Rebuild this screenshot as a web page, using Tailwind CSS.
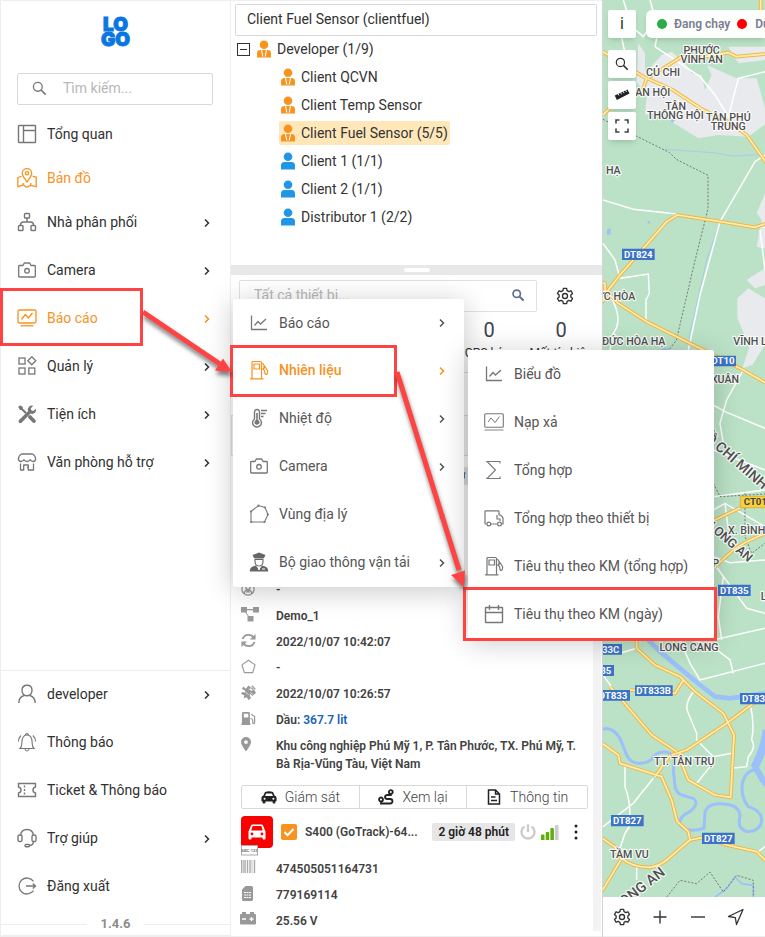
<!DOCTYPE html>
<html lang="vi">
<head>
<meta charset="utf-8">
<meta name="viewport" content="width=device-width, initial-scale=1">
<title>Bản đồ</title>
<script src="https://cdn.jsdelivr.net/npm/@tailwindcss/browser@4"></script>
</head>
<body class="font-['Roboto','Noto_Sans',sans-serif] text-sm text-[#303030]">

<svg class="hidden" aria-hidden="true">
  <symbol id="chev" viewBox="0 0 8 10"><path d="M2 1.500 5.500 5 2 8.500" fill="none" stroke="currentColor" stroke-width="1.500"/></symbol>
  <symbol id="search" viewBox="0 0 16 16"><circle cx="6.200" cy="6.200" r="4.700" fill="none" stroke="currentColor" stroke-width="1.400"/><path d="m9.600 9.600 5 5" stroke="currentColor" stroke-width="1.700"/></symbol>
  <symbol id="dash" viewBox="0 0 20 20"><g fill="none" stroke="currentColor" stroke-width="1.400"><rect x="1.500" y="1.500" width="17" height="17" rx=".5"/><path d="M6.500 1.500v17M6.500 6.500h12"/></g></symbol>
  <symbol id="map" viewBox="0 0 20 20"><g fill="none" stroke="currentColor" stroke-width="1.300" stroke-linejoin="round"><path d="M10 14C7.500 10.500 5.300 8 5.300 5.300a4.700 4.700 0 0 1 9.400 0C14.700 8 12.500 10.500 10 14Z"/><circle cx="10" cy="5.300" r="1.600"/><path d="M4.500 8.300.8 9.500v9.300l5.400-1.900 3.300 2.300 4.200-1.900 5.500 1.300V9.200l-3.700-1M6.200 17v-2M13.700 17v-2"/></g></symbol>
  <symbol id="dist" viewBox="0 0 20 20"><g fill="none" stroke="currentColor" stroke-width="1.400"><rect x="7.500" y="1.500" width="5" height="4.500" rx=".8"/><rect x="1.500" y="13.500" width="4.500" height="5" rx=".8"/><rect x="14" y="13.500" width="4.500" height="5" rx=".8"/><path d="M10 6v4M3.500 13.500V13a3 3 0 0 1 3-3h7a3 3 0 0 1 3 3v.500"/></g></symbol>
  <symbol id="camera" viewBox="0 0 20 20"><g fill="none" stroke="currentColor" stroke-width="1.300" stroke-linejoin="round"><path d="M2.500 5.500h3.500L7.300 3h5.400L14 5.500h3.500q.8 0 .8.800v9.900q0 .8-.8.800h-15q-.8 0-.8-.8V6.300q0-.8.8-.8Z"/><circle cx="10" cy="10.800" r="2.300"/></g></symbol>
  <symbol id="report" viewBox="0 0 20 20"><g fill="none" stroke="currentColor" stroke-width="1.300" stroke-linejoin="round"><rect x="1" y="2" width="18" height="13" rx="1.500"/><path d="m4.500 11.500 3.800-5 3 3.500L15.500 5"/><path d="M3.500 17.800h13"/></g></symbol>
  <symbol id="grid" viewBox="0 0 20 20"><g fill="none" stroke="currentColor" stroke-width="1.300"><rect x="2" y="2" width="6" height="6"/><rect x="2" y="12" width="6" height="6"/><rect x="11.800" y="12" width="6" height="6"/><path d="m14.800.8 4 4-4 4-4-4Z"/></g></symbol>
  <symbol id="tools" viewBox="0 0 20 20"><path fill="currentColor" d="M1.200 3 3 1.300 5.800 3v1.600l4 4-1.400 1.400-4-4H3ZM11 12.500l1.800-1.600 1 .4 4.700 4.600q.9 1.300-.3 2.500t-2.400.2l-4.500-4.700Z"/><path fill="currentColor" d="M18.800 4.800q.8 3-1.600 4.500-1.600 1-3.600.3L4.500 18.700q-1.500.9-2.500-.1t0-2.500L11 7.200q-.8-2.700 1-4.500Q13.700 1 16.300 1.800L13.800 4.300l.5 2 2 .6Z"/></symbol>
  <symbol id="store" viewBox="0 0 20 20"><g fill="none" stroke="currentColor" stroke-width="1.300" stroke-linejoin="round"><path d="M4.500 2h11q2.800 1.500 3.200 5-.5 2.500-2.500 2.500-1.800 0-3-1.800-1.200 1.800-3.200 1.800T7 7.700Q5.700 9.500 4 9.500 2 9.500 1.300 7q.4-3.500 3.200-5Z"/><path d="M3.500 11.500V18h3.200v-5h4.600v5h5.200v-6.500M10 15.500h1.500"/></g></symbol>
  <symbol id="user" viewBox="0 0 20 20"><g fill="none" stroke="currentColor" stroke-width="1.400"><path d="M10 1.300c3 0 5 2 5 5s-2 5.500-5 5.500-5-2.500-5-5.500 2-5 5-5ZM1.800 19c0-4.500 2.200-6.500 5.200-7.500M18.200 19c0-4.500-2.200-6.500-5.200-7.500"/></g></symbol>
  <symbol id="bell" viewBox="0 0 20 20"><g fill="none" stroke="currentColor" stroke-width="1.100"><path d="M3 16.500q1.800-1.500 1.800-5C4.800 6 6.500 3 10 3s5.200 3 5.200 8.500q0 3.500 1.800 5ZM8.500 3q0-1.500 1.500-1.500T11.500 3M8 17q.4 2 2 2t2-2M4 3.500Q1.500 6 1.500 9.500M16 3.500q2.500 2.500 2.500 6"/></g></symbol>
  <symbol id="ticket" viewBox="0 0 20 20"><g fill="none" stroke="currentColor" stroke-width="1.400"><path d="M1.500 3.500h17V7q-2.500.5-2.500 3t2.500 3v3.500h-17V13Q4 12.500 4 10T1.500 7Z"/><path d="M7.500 5.500v9.500" stroke-dasharray="2 1.500"/></g></symbol>
  <symbol id="headset" viewBox="0 0 20 20"><g fill="none" stroke="currentColor" stroke-width="1.400"><path d="M3.500 7Q4.500 1.500 10 1.500T16.500 7"/><rect x="1" y="7" width="4" height="6.500" rx="1.600"/><rect x="15" y="7" width="4" height="6.500" rx="1.600"/><path d="M16.500 13.500q0 3.500-4 4"/><rect x="8" y="16.500" width="4.500" height="2.200" rx="1"/></g></symbol>
  <symbol id="logout" viewBox="0 0 20 20"><g fill="none" stroke="currentColor" stroke-width="1.300"><path d="M16.500 5.300A8 8 0 1 0 16.500 14.700M9 10h9.500M15.800 7.500l2.700 2.500-2.700 2.500"/></g></symbol>
  <symbol id="chart" viewBox="0 0 20 20"><g fill="none" stroke="currentColor" stroke-width="1.300"><path d="M2.500 2.500v14h15.500M5.500 12.500l3.500-4 2.500 2.500L17 6"/></g></symbol>
  <symbol id="fuel" viewBox="0 0 20 20"><g fill="none" stroke="currentColor" stroke-width="1.200"><path d="M3 18.500V2.500q0-1 1-1h7.500q1 0 1 1v16M1 18.800h13.500M5 4h5.500v5H5ZM13.500 3l5 7.500q.5 1.500-.5 3.500-1.500 1-2-.5l-.5-3-2-2M15 5.500v3.500"/></g></symbol>
  <symbol id="thermo" viewBox="0 0 20 20"><g fill="none" stroke="currentColor" stroke-width="1.400"><path d="M5.500 11V4a2.500 2.500 0 0 1 5 0v7a4.400 4.400 0 1 1-5 0Z"/><path d="M12 2.500h6M12 5.500h4.500M12 8.500h2.500"/></g><path d="M7.200 5h1.600v7a2.500 2.500 0 1 1-1.600 0Z" fill="currentColor"/></symbol>
  <symbol id="poly" viewBox="0 0 20 20"><path d="M2 7.500 9.500 1.500 16 3.500l3 7-3.500 7.500H2Z" fill="none" stroke="currentColor" stroke-width="1.100"/><g fill="currentColor"><circle cx="2" cy="7.500" r="1.100"/><circle cx="9.500" cy="1.700" r="1.100"/><circle cx="16" cy="3.500" r="1"/><circle cx="18.800" cy="10.500" r="1.100"/><circle cx="15.500" cy="18" r="1.100"/><circle cx="2.200" cy="18" r="1.100"/></g></symbol>
  <symbol id="officer" viewBox="0 0 20 20"><path fill="currentColor" d="M3.500 3 10 .5 16.500 3l-1.500 3H5ZM5.500 6.500h9V8h-9ZM.8 19.500q0-4 3-5l3-1 3.200 4 3.200-4 3 1q3 1 3 5Z"/><path d="M6 8v2q.5 4 4 4t4-4V8" fill="none" stroke="currentColor" stroke-width="1.100"/><path d="m9 14.500 1 3.500 1-3.500M13 17h3" stroke="#fff" fill="none"/></symbol>
  <symbol id="monitor" viewBox="0 0 20 20"><g fill="none" stroke="currentColor"><rect x=".7" y="1.700" width="18.600" height="13.600" rx="1" stroke-width="1.100"/><path d="m4 10 3-4 4 4.500 4.500-6" stroke-width="1"/><path d="M.5 18h19" stroke-width="1.500" opacity=".6"/></g></symbol>
  <symbol id="sigma" viewBox="0 0 20 20"><path d="M16 3.500V1.500H3L11.500 10 3 18.500h13v-2" fill="none" stroke="currentColor" stroke-width="1.100"/></symbol>
  <symbol id="truck" viewBox="0 0 20 20"><g fill="none" stroke="currentColor" stroke-width="1.200" stroke-linejoin="round"><path d="M2.500 16H1.500q-.5 0-.5-.5V3.500q0-.7.7-.7h12.600q.7 0 .7.700V7h1.500q2.500 2 2.500 3.500V16h-1M7 16h6M13 7v4h3v2"/><circle cx="4.800" cy="16" r="1.900"/><circle cx="15.500" cy="16" r="1.900"/></g></symbol>
  <symbol id="cal" viewBox="0 0 20 20"><g fill="none" stroke="currentColor" stroke-width="1.400"><rect x="1.500" y="3.500" width="17" height="15" rx=".5"/><path d="M1.500 8.500h17M5.500 1v5M14.500 1v5"/></g></symbol>
  <symbol id="gear" viewBox="0 0 20 20"><g fill="none" stroke="currentColor" stroke-width="1.500" stroke-linejoin="round"><path d="M8.200 1.500h3.600l.5 2.500 1.900 1.100 2.400-.9 1.800 3.100-1.900 1.600v2.200l1.900 1.600-1.800 3.100-2.400-.9-1.900 1.100-.5 2.500H8.200L7.700 16l-1.900-1.100-2.400.9-1.800-3.100 1.900-1.600V8.900L1.600 7.300l1.800-3.100 2.400.9L7.700 4Z"/><circle cx="10" cy="10" r="2.800"/></g></symbol>
  <symbol id="tie" viewBox="0 0 16 18"><circle cx="8" cy="4.800" r="4.300" fill="currentColor"/><path fill="currentColor" d="M1 17v-3.500Q1 10.300 4.300 10h7.400q3.300.3 3.300 3.500V17q0 .5-.5.500h-13Q1 17.500 1 17Z"/><path d="M5.500 10l1.300 6.500M10.500 10l-1.300 6.500" stroke="#fff" stroke-width="1.100"/></symbol>
  <symbol id="person" viewBox="0 0 16 18"><circle cx="8" cy="4.800" r="4.300" fill="currentColor"/><path fill="currentColor" d="M1 17v-3.500Q1 10.300 4.300 10h7.400q3.300.3 3.300 3.500V17q0 .5-.5.500h-13Q1 17.500 1 17Z"/></symbol>
  <symbol id="car" viewBox="0 0 20 16"><path fill="currentColor" fill-rule="evenodd" d="M4 1.500Q4.500.5 5.500.5h9q1 0 1.500 1L18.500 7.500V14.500q0 1-1 1h-1q-1 0-1-1V13.500h-11v1q0 1-1 1h-1q-1 0-1-1V7.500ZM5.700 2 4.200 6.500h11.600L14.300 2ZM5 8.500a1.400 1.400 0 1 0 0 2.800 1.400 1.400 0 0 0 0-2.800Zm10 0a1.400 1.400 0 1 0 0 2.800 1.400 1.400 0 0 0 0-2.800Z"/></symbol>
</svg>

<div class="relative flex h-screen min-h-[720px] w-full overflow-hidden bg-white">

  <!-- Main navigation -->
  <nav class="flex w-[231px] shrink-0 flex-col border border-b-2 border-[#eee] bg-white">
    <div class="flex h-[72px] flex-col items-center justify-start pt-4 font-['Inter','Roboto',sans-serif] text-[19px] leading-[15px] font-black text-[#0876e4] [-webkit-text-stroke:1px_#0876e4]">
      <span>LO</span><span>GO</span>
    </div>
    <label class="mr-[17px] mb-[9px] ml-4 flex h-8 shrink-0 items-center rounded-xs border border-[#d9d9d9] pb-[2px] pl-[14px] text-[#777]">
      <svg class="mr-4 size-[15px] shrink-0"><use href="#search"/></svg>
      <input type="text" aria-label="Tìm kiếm" placeholder="Tìm kiếm..." class="w-full min-w-0 outline-none placeholder:text-[#b8b8b8]">
    </label>
    <div class="flex flex-col gap-2">
      <div class="-mb-1 flex flex-col gap-1">
        <a href="#" class="flex h-10 items-center gap-[10px] px-4"><svg class="size-5 text-[#777]"><use href="#dash"/></svg>Tổng quan</a>
        <a href="#" class="flex h-10 items-center gap-[10px] px-4 text-[#f7931e]"><svg class="size-5"><use href="#map"/></svg>Bản đồ</a>
      </div>
      <a href="#" class="flex h-10 items-center gap-[10px] px-4"><svg class="size-5 text-[#777]"><use href="#dist"/></svg>Nhà phân phối<svg class="mt-px mr-[3px] ml-auto h-[10px] w-2"><use href="#chev"/></svg></a>
      <a href="#" class="flex h-10 items-center gap-[10px] px-4"><svg class="size-5 text-[#777]"><use href="#camera"/></svg>Camera<svg class="mt-px mr-[3px] ml-auto h-[10px] w-2"><use href="#chev"/></svg></a>
      <a href="#" class="flex h-10 items-center gap-[10px] px-4 text-[#f7931e]"><svg class="size-5"><use href="#report"/></svg>Báo cáo<svg class="mt-px mr-[3px] ml-auto h-[10px] w-2"><use href="#chev"/></svg></a>
      <a href="#" class="flex h-10 items-center gap-[10px] px-4"><svg class="size-5 text-[#777]"><use href="#grid"/></svg>Quản lý<svg class="mt-px mr-[3px] ml-auto h-[10px] w-2"><use href="#chev"/></svg></a>
      <a href="#" class="flex h-10 items-center gap-[10px] px-4"><svg class="size-5 text-[#777]"><use href="#tools"/></svg>Tiện ích<svg class="mt-px mr-[3px] ml-auto h-[10px] w-2"><use href="#chev"/></svg></a>
      <a href="#" class="flex h-10 items-center gap-[10px] px-4"><svg class="size-5 text-[#777]"><use href="#store"/></svg>Văn phòng hỗ trợ<svg class="mt-px mr-[3px] ml-auto h-[10px] w-2"><use href="#chev"/></svg></a>
    </div>
    <div class="mt-auto flex flex-col gap-2 border-t border-[#eee] pt-[3px]">
      <a href="#" class="flex h-10 items-center gap-[10px] px-4"><svg class="size-5 text-[#777]"><use href="#user"/></svg>developer<svg class="mt-px mr-[3px] ml-auto h-[10px] w-2"><use href="#chev"/></svg></a>
      <a href="#" class="flex h-10 items-center gap-[10px] px-4"><svg class="size-5 text-[#777]"><use href="#bell"/></svg>Thông báo</a>
      <a href="#" class="flex h-10 items-center gap-[10px] px-4"><svg class="size-5 text-[#777]"><use href="#ticket"/></svg>Ticket &amp; Thông báo</a>
      <a href="#" class="flex h-10 items-center gap-[10px] px-4"><svg class="size-5 text-[#777]"><use href="#headset"/></svg>Trợ giúp<svg class="mt-px mr-[3px] ml-auto h-[10px] w-2"><use href="#chev"/></svg></a>
      <a href="#" class="flex h-10 items-center gap-[10px] px-4"><svg class="size-5 text-[#777]"><use href="#logout"/></svg>Đăng xuất</a>
    </div>
    <div class="flex h-[29px] items-center gap-[14px] pt-2 text-[13px] font-bold text-[#8c8c8c]">
      <span class="h-px flex-1 bg-[#eee]"></span>1.4.6<span class="h-px flex-1 bg-[#eee]"></span>
    </div>
  </nav>

  <!-- Account tree and device list -->
  <section class="flex w-[371px] shrink-0 flex-col border-y border-[#eee] bg-white">
    <div class="h-[264px] shrink-0 px-1 pt-[3px]">
      <input type="text" aria-label="Tài khoản" value="Client Fuel Sensor (clientfuel)" class="block h-8 w-[362px] rounded-xs border border-[#d9d9d9] px-[11px] pb-[2px] outline-none">
      <ul class="-mt-px text-[#333]">
        <li class="flex h-7 items-center pl-[2px]"><button aria-label="Thu gọn" class="mr-[6px] flex size-[13px] items-center justify-center border border-[#333]"><span class="h-px w-[7px] bg-[#333]"></span></button><svg class="mr-[5px] h-[18px] w-4 text-[#f7931e]"><use href="#tie"/></svg>Developer (1/9)</li>
        <li class="flex h-7 items-center pl-[45px]"><svg class="mr-[5px] h-[18px] w-4 text-[#f7931e]"><use href="#tie"/></svg>Client QCVN</li>
        <li class="flex h-7 items-center pl-[45px]"><svg class="mr-[5px] h-[18px] w-4 text-[#f7931e]"><use href="#tie"/></svg>Client Temp Sensor</li>
        <li class="flex h-7 items-center pl-11"><span class="flex h-6 items-center rounded-xs bg-[#ffe7ba] pr-[2px] pl-px"><svg class="mr-[5px] h-[18px] w-4 text-[#f7931e]"><use href="#tie"/></svg>Client Fuel Sensor (5/5)</span></li>
        <li class="flex h-7 items-center pl-[45px]"><svg class="mr-[5px] h-[18px] w-4 text-[#2196e8]"><use href="#person"/></svg>Client 1 (1/1)</li>
        <li class="flex h-7 items-center pl-[45px]"><svg class="mr-[5px] h-[18px] w-4 text-[#2196e8]"><use href="#person"/></svg>Client 2 (1/1)</li>
        <li class="flex h-7 items-center pl-[45px]"><svg class="mr-[5px] h-[18px] w-4 text-[#2196e8]"><use href="#person"/></svg>Distributor 1 (2/2)</li>
      </ul>
    </div>
    <div class="flex h-[10px] shrink-0 items-center justify-center bg-[#e8e8e8]"><span class="h-1 w-[26px] rounded-full bg-white"></span></div>

    <div class="flex min-h-0 flex-1 flex-col">
      <div class="flex shrink-0 items-center pt-[5px] pl-2">
        <label class="flex h-8 w-[298px] items-center rounded-xs border border-[#dfe0ea] pr-3 pb-[2px] pl-[14px] text-[#65708f]">
          <input type="text" aria-label="Tất cả thiết bị" placeholder="Tất cả thiết bị..." class="w-full min-w-0 outline-none placeholder:text-[#b8b8b8]">
          <svg class="size-3 shrink-0" viewBox="1 1 14 14"><circle cx="6.500" cy="6.500" r="4.300" fill="none" stroke="currentColor" stroke-width="2"/><path d="m10 10 4.500 4.500" stroke="currentColor" stroke-width="2.400"/></svg>
        </label>
        <button aria-label="Cài đặt" class="ml-[19px]"><svg class="size-[18px]"><use href="#gear"/></svg></button>
      </div>
      <div class="flex h-[61px] shrink-0 justify-end border-b border-[#ddd] pt-1 pr-[5px] text-center">
        <div class="w-[72px]"><div class="text-xl leading-7 text-[#3f4254]">0</div><div class="mt-px text-xs leading-4">GPS kém</div></div>
        <div class="w-[72px]"><div class="text-xl leading-7 text-[#3f4254]">0</div><div class="mt-px text-xs leading-4">Mất tín hiệu</div></div>
      </div>

      <div class="flex min-h-0 flex-1">
        <div class="min-w-0 flex-1 overflow-hidden">
          <div class="mt-[42px] h-[41px] border border-[#ddd] bg-[#f7f7f7]"></div>
          <div class="flex h-10 items-center justify-end pr-[78px]"><span class="rounded-xs bg-[#e4e4e4] px-[6px] text-xs leading-[18px] font-semibold">2 giờ 48 phút</span></div>
          <div class="mt-[81px] pr-[5px] pl-[10px] text-xs leading-[18px] font-semibold text-[#424242]">
            <div class="flex py-1"><svg class="mt-px mr-[21px] size-[14px] shrink-0 text-[#999]" viewBox="0 0 16 16"><g fill="none" stroke="currentColor" stroke-width="1.500"><circle cx="8" cy="8" r="7"/><circle cx="8" cy="6" r="2.500"/><path d="M3.500 13q1-4 4.500-4t4.500 4M6 12l2-1.500 2 1.500"/></g></svg>-</div>
            <div class="flex py-1"><svg class="mr-[17px] h-4 w-[18px] shrink-0 text-[#999]" viewBox="0 0 18 16"><path fill="currentColor" d="M0 0h6v5.500H0ZM12 0h6v5.500h-6ZM6.500 9h6v5.500h-6ZM5 2h8v1.200H5Z"/><path d="M4.500 5 8 10" stroke="currentColor"/></svg>Demo_1</div>
            <div class="flex py-1"><svg class="mr-5 size-[15px] shrink-0 text-[#999]" viewBox="0 0 16 16"><g fill="none" stroke="currentColor" stroke-width="2"><path d="M1.800 6.500Q3 2 8 2q3.500 0 5.500 3M14.200 9.500Q13 14 8 14q-3.500 0-5.500-3"/></g><path fill="currentColor" d="M15.500 1v6h-6ZM.5 15V9h6Z"/></svg>2022/10/07 10:42:07</div>
            <div class="flex py-1"><svg class="mr-5 size-[15px] shrink-0 text-[#999]" viewBox="0 0 16 16"><path d="m8 1.300 7 5-2.600 8.200H3.600L1 6.300Z" fill="none" stroke="currentColor" stroke-width="1.200"/></svg>-</div>
            <div class="flex py-1"><svg class="mr-5 size-[15px] shrink-0 text-[#999]" viewBox="0 0 16 16"><path fill="currentColor" d="M5 4 8 .5l2.500 2-1 2.500 1.500 1.200L14 5l2 3.500-4 3.200-1.800-2-1 .8 1.300 4-2.500 1.500-1.800-3L3 14l.5-3L0 9.500l1.500-2L4 8l.8-1.500L1 4l1.500-2.500Z"/><path d="m11.500.8 3.700 3.700M11 3l2.300 2.200" stroke="currentColor" stroke-width="1.300" fill="none"/><path d="m5 7.500 3 3M8 4l1.500 1.500M10.500 8l2 2" stroke="#fff" stroke-width=".8"/></svg>2022/10/07 10:26:57</div>
            <div class="flex py-1"><svg class="mr-5 size-[15px] shrink-0 text-[#999]" viewBox="0 0 16 16"><path fill="currentColor" fill-rule="evenodd" d="M1 2.500Q1 1 2.500 1H8q1.500 0 1.500 1.500V13H10v2H.5v-2H1ZM3 3v4h4.800V3Z"/><path d="M11 3.500 14.500 6v6.500q-.7 2-2 .2V9.500q-.3-1.500-2.500-1.500" fill="none" stroke="currentColor" stroke-width="1.300"/></svg><span>Dầu: <b class="font-semibold text-[#1763b5]">367.7 lit</b></span></div>
            <div class="flex py-1"><svg class="mr-[25px] h-[15px] w-[10px] shrink-0 text-[#999]" viewBox="0 0 10 15"><path fill="currentColor" fill-rule="evenodd" d="M5 0a5 5 0 0 1 5 5q0 2.800-5 9.500Q0 7.800 0 5a5 5 0 0 1 5-5Zm0 3.200a1.900 1.900 0 1 0 0 3.800 1.900 1.900 0 0 0 0-3.800Z"/></svg><span>Khu công nghiệp Phú Mỹ 1, P. Tân Phước, TX. Phú Mỹ, T. Bà Rịa-Vũng Tàu, Việt Nam</span></div>

            <div class="mt-2 flex h-6 rounded-xs border border-[#d9d9d9] text-sm font-light">
              <button class="flex flex-auto items-center justify-center gap-2 border-r border-[#d9d9d9]"><svg class="h-[13px] w-4 text-[#222]" viewBox="0 0 20 16"><path fill="currentColor" fill-rule="evenodd" d="M5 1q5-1.500 10 0l2 4.500q2.500 1 2.500 3V12q0 1-1.500 1v1.500q0 1-1.200 1h-1q-1.300 0-1.300-1V13h-9v1.500q0 1-1.300 1h-1q-1.200 0-1.200-1V13Q.5 13 .5 12V8.500q0-2 2.500-3ZM6.500 3 5 6h10l-1.500-3ZM4.500 8.300a1.300 1.300 0 1 0 0 2.600 1.300 1.300 0 0 0 0-2.600Zm11 0a1.300 1.300 0 1 0 0 2.600 1.300 1.300 0 0 0 0-2.600Z"/></svg>Giám sát</button>
              <button class="flex flex-auto items-center justify-center gap-2 border-r border-[#d9d9d9]"><svg class="size-4 text-[#222]" viewBox="0 0 16 16"><g fill="none" stroke="currentColor" stroke-width="1.800"><circle cx="12.800" cy="3" r="1.900"/><circle cx="3" cy="10.500" r="2"/><path d="M3 12.500v2h9q2.500 0 2.500-2.200T12 10H9.500Q7 10 7 8t2.500-2h3.300V5"/></g></svg>Xem lại</button>
              <button class="flex flex-auto items-center justify-center gap-2"><svg class="size-4 text-[#222]" viewBox="0 0 16 16"><path d="M2.500 1h7l4 4v10h-11ZM9.500 1v4h4M5 8h4.500M5 11.500h6" fill="none" stroke="currentColor" stroke-width="1.500"/></svg>Thông tin</button>
            </div>
          </div>

          <div class="mt-[7px] pr-[5px] pl-[10px] text-xs leading-[18px] font-semibold text-[#424242]">
            <div class="flex h-8 items-center">
              <span class="flex size-8 shrink-0 items-center justify-center rounded-sm bg-[#fa0000] text-white"><svg class="h-4 w-5"><use href="#car"/></svg></span>
              <span class="relative ml-2 size-4 shrink-0"><input type="checkbox" checked aria-label="S400 (GoTrack)" class="block size-4 appearance-none rounded-xs bg-[#f7931e]"><svg class="pointer-events-none absolute inset-0 size-4" viewBox="0 0 16 16"><path d="m3.500 8 3 3.200 6-6.200" fill="none" stroke="#fff" stroke-width="2"/></svg></span>
              <span class="ml-2 whitespace-nowrap">S400 (GoTrack)-64...</span>
              <span class="ml-auto rounded-xs bg-[#e6e6e6] px-[6px] whitespace-nowrap text-[#222]">2 giờ 48 phút</span>
              <svg class="ml-[5px] size-4 shrink-0 text-[#ccc]" viewBox="0 0 16 16"><path d="M4.500 2.500a6.500 6.500 0 1 0 7 0M8 .3V8" fill="none" stroke="currentColor" stroke-width="2.300"/></svg>
              <svg class="ml-[5px] h-[15px] w-[18px] shrink-0" viewBox="0 0 18 15"><path fill="#5fae0a" d="M0 10.500q0-1 1-1h1.500q1 0 1 1V15H0ZM4.700 8q0-1 1-1h1.500q1 0 1 1v7H4.700ZM9.400 4q0-1 1-1h1.500q1 0 1 1v11H9.400Z"/><path fill="#ccc" d="M14 1q0-1 1-1h1.500q1 0 1 1v14H14Z"/></svg>
              <button aria-label="Thêm" class="mr-[10px] ml-[15px]"><svg class="h-4 w-1" viewBox="0 0 4 16"><g fill="#222"><circle cx="2" cy="2" r="1.500"/><circle cx="2" cy="8" r="1.500"/><circle cx="2" cy="14" r="1.500"/></g></svg></button>
            </div>
            <div class="-mt-1 flex h-3 items-center"><svg class="h-[11px] w-[18px]" viewBox="0 0 18 11"><rect x=".5" y=".5" width="16" height="9.500" fill="#fff" stroke="#aaa"/><text x="8.500" y="7" font-size="4" font-weight="700" fill="#777" text-anchor="middle">ABC-123</text></svg></div>
            <div class="flex py-1"><svg class="mr-5 h-[13px] w-[15px] shrink-0" viewBox="0 0 15 13"><path d="M.7 0v13M3 0v13M6.500 0v13M9 0v13M13.500 0v13" stroke="#aaa" stroke-width="1.400"/><path d="M4.500 0v13M11 0v13" stroke="#bbb" stroke-width=".9"/></svg>474505051164731</div>
            <div class="flex py-1"><svg class="mr-[23px] ml-px h-[15px] w-[11px] shrink-0" viewBox="0 0 11 15"><path fill="#999" d="M3.500 0H9.500Q11 0 11 1.500v12Q11 15 9.500 15h-8Q0 15 0 13.500V3.500Z"/><path d="M2 6.500h7M2 9h7M2 11.500h7" stroke="#fff" stroke-width="1.200" stroke-dasharray="2 .5"/></svg>779169114</div>
            <div class="flex py-1"><svg class="-ml-px mr-5 h-[13px] w-4 shrink-0" viewBox="0 0 16 13"><path fill="#999" d="M2 0h4v2h4V0h4v2h1q1 0 1 1v8.500q0 1-1 1H1q-1 0-1-1V3q0-1 1-1h1Z"/><path d="M2 7h4M9.500 7h4M11.500 5v4" stroke="#fff" stroke-width="1.300"/></svg>25.56 V</div>
          </div>
        </div>
        <div class="mr-px mb-[5px] w-2 shrink-0 bg-[#f3f3f3]"></div>
      </div>
    </div>
  </section>

  <!-- Map -->
  <main class="flex min-w-0 flex-1 flex-col border-l border-[#d4d4d4]">
    <div class="relative min-h-0 flex-1 overflow-hidden bg-[#bbe2c6]">
      <svg class="absolute inset-0 size-full" viewBox="9 0 486 2691" preserveAspectRatio="xMinYMin slice" role="img" aria-label="Bản đồ">
        <g fill="#e8eaed">
          <path d="m115 130 20 30v60l50-55 30-10 40 35 20 30 30 5 10 45 20-45-15-30 90 40 60 0 20 70 15 60-60 45-90-5-60 10-80-50-30-30-50 10 5-60-30-40ZM385 140l110 0v40l-80 10Z"/>
          <path d="m495 580-25 60 15 20-15 80 25 5ZM495 805l-55 35 25 25 30-10ZM495 895l-50-30-33 30 0 60 30 70 5 20-20 60 30-10 38-60Z"/>
        </g>
        <g fill="#9cc0f9"><path d="m22 688 10-3v18l-12 2ZM140 665l10-3v10ZM205 355l22 5-10 8ZM180 1045h30l-15 15Z"/></g>
        <g fill="none" stroke="#9cc0f9" stroke-width="14" stroke-linejoin="round">
          <path stroke-width="2" d="M190 448 340 458 400 468 475 464M360 665 320 780 270 1000 265 1050"/>
          <path stroke-width="14" d="M140 1915 180 1955 240 2005 300 2055 345 2090 390 2095 495 2080"/>
          <path stroke-width="9" d="M0 2190Q35 2175 60 2215L80 2265Q90 2290 120 2290 150 2290 165 2265 185 2250 210 2260 225 2270 220 2310L225 2360Q230 2385 255 2388L280 2395Q300 2410 270 2435 235 2450 240 2475 260 2500 312 2485L315 2435Q325 2408 370 2412 420 2415 420 2450 410 2485 440 2495 485 2495 485 2455 480 2430 445 2420 420 2390 428 2345 440 2310 465 2310"/>
          <path stroke-width="24" d="M500 2190Q495 2240 465 2300"/><path stroke-width="18" d="m460 2290 25 45 15 20"/>
          <path stroke-width="5" d="m345 2691 35-25 25-35 20 20 35 5v40"/>
        </g>
        <g fill="none" stroke="#fff" stroke-width="4.500">
          <path d="M70 0 95 80 130 110 170 50M150 0 175 90 165 140 300 230 345 285 385 350 415 235 495 215M60 90 75 160"/>
          <path d="m495 465-30 20-105 180-60 220-35 165M9 600 100 628 230 642M9 730 45 780 60 835 145 822 148 880 138 900V960M35 895Q70 960 40 1000L30 1050M480 690 495 810"/>
          <path d="m430 1110-50 90-20 70 10 60M340 1215 375 1235 495 1285M340 1350 495 1410M340 1490 495 1470M340 1530 375 1510 495 1580M375 1510 385 1590M340 1670 390 1688 495 1680M345 1695 400 1770 440 1825 495 1840M370 1730 355 1850 365 1920M340 1920 495 1885"/>
          <path d="m240 1920 30 70 30 50 195-50M280 1920 345 1945 390 1980 400 2020M9 2025 60 2095M285 2070Q250 2110 265 2140L290 2200 290 2220 340 2270 395 2260M340 2270 330 2300 290 2350M450 2110Q465 2170 455 2220 470 2240 445 2270L440 2300 395 2305M75 2300V2360Q95 2410 88 2480L75 2500 60 2545M160 2335 100 2410 9 2480M110 2600V2640M495 2540 475 2555M60 1960 110 1945"/>
        </g>
        <g fill="none" stroke="#777" stroke-width="3" stroke-dasharray="6 5">
          <path d="m9 358 100 50 100 50 20 20 95 48v100l-40 160-55 235-25 32M340 1450l20 40 135-8M435 1480v130l20 50 40-30M200 2691l40-50 50 10 40-35 40 60 40-50 50 15v60"/>
        </g>
        <g fill="none" stroke-linejoin="round">
          <g stroke="#f2b63c" stroke-width="11">
            <path id="r1" d="m0 150 130 80 85 38 95 62 75 35 55 40 60 85M145 232l45-27 55-35 55 2 85-14 25 12 85-8M9 345l25-25M100 290l30-25 10-30M482 0v45"/>
            <path id="r2" d="m0 920 25-50 35-45 140-160 32-20 118 18 115 19 35-12M0 845l15 5v20l40 40 85 55 170 85 120 60 65 38M340 1562l80-38M345 1700l55-50 40-25 60-27"/>
            <path id="r3" d="M110 1900v45l55 50 75 35 45 45 85 65 32 65-10 187-47-7-80-45-20-50-5-30M30 2060l40 45 85 100 75 50M500 2080l-60 45-60 45-120 80-45 15M90 2070l135 10 25-40M0 2225l55 40 5 25 125 40 30 70 17 65 33 30 5 25M210 2265l-45 65"/>
            <path id="r4" d="m0 2510 50 35 15 30q35 28 85 27 30-5 50-22l40-35 30-25 40-8 70 23 90 20 30 30M65 2575l-60 100"/>
          </g>
          <g stroke="#fdeeb8" stroke-width="5"><use href="#r1"/><use href="#r2"/><use href="#r3"/><use href="#r4"/></g>
        </g>
        <g font-family="Roboto, sans-serif" font-weight="500" font-size="32" fill="#505050" stroke="#fff" stroke-opacity=".85" stroke-width="7" stroke-linejoin="round" paint-order="stroke" text-anchor="middle">
          <text x="305" y="161">PHƯỚC</text><text x="305" y="188">VĨNH AN</text>
          <text x="189" y="229">CỦ CHI</text><text x="211" y="287" text-anchor="end">AN HỘI</text>
          <text x="227" y="329">TÂN</text><text x="226" y="356">THÔNG HỘI</text>
          <text x="385" y="364">TÂN PHÚ</text><text x="385" y="391">TRUNG</text>
          <text x="40" y="522">HẠ</text><text x="106" y="899" text-anchor="end">ĐỨC HÒA</text><text x="101" y="1036">ĐỨC HÒA HẠ</text>
          <text x="400" y="1034" text-anchor="start">VĨNH LỘC</text>
          <text x="375" y="1149">XUÂN</text><text x="384" y="1603" text-anchor="start">X. BÌNH</text><text x="482" y="1801" text-anchor="start">LONG</text><text x="347" y="1700">P</text>
          <text x="267" y="1954">LONG CANG</text><text x="253" y="2294">TT. TÂN TRỤ</text><text x="88" y="2573">TẦM VU</text>
          <g font-size="43"><text transform="translate(488 1470) rotate(41)" text-anchor="end">HỒ CHÍ MINH</text><text transform="translate(444 1688) rotate(41)" text-anchor="end" font-size="38">LONG AN</text><text transform="translate(198 2622) rotate(-38)" text-anchor="end">LONG AN</text></g>
        </g>
        <g fill="#3b73c8"><path d="M66 746h98v34H66ZM310 1067h98v32h-98ZM354 1754h98v34h-98ZM0 1932h66v32H0ZM0 1995h42v33H0ZM0 2070h90v32H0ZM105 2056h113v32H105ZM420 2079h98v34h-98ZM33 2445h98v34H33ZM306 2498h98v34h-98Z"/></g>
        <path fill="#f9cf3c" stroke="#dba51c" stroke-width="2" d="M421 1489h90v34h-90Z"/>
        <g font-family="Roboto, sans-serif" font-weight="700" font-size="29" fill="#fff" text-anchor="middle">
          <text x="115" y="773">DT824</text><text x="369" y="1093">DT10</text><text x="403" y="1781">DT835</text><text x="58" y="1958" text-anchor="end">DT833C</text><text x="34" y="2022" text-anchor="end">DT835</text><text x="82" y="2096" text-anchor="end">DT833</text><text x="161" y="2082">DT833B</text><text x="469" y="2106">DT835</text><text x="82" y="2472">DT827</text><text x="355" y="2525">DT827</text><text x="466" y="1516" fill="#444">CT01</text>
        </g>
      </svg>

      <div class="relative flex items-start gap-[10px] pt-[10px] pl-[5px]">
        <div class="flex flex-col gap-[3px]">
          <button aria-label="Thông tin" class="mb-[9px] flex size-7 items-center justify-center rounded-xs bg-white text-base leading-none shadow-md">i</button>
          <button aria-label="Tìm" class="flex size-7 items-center justify-center rounded-xs bg-white shadow-md"><svg class="size-[14px]"><use href="#search"/></svg></button>
          <button aria-label="Đo khoảng cách" class="flex size-7 items-center justify-center rounded-xs bg-white shadow-md"><svg class="size-4" viewBox="0 0 16 16"><path fill="#222" d="m.8 8.500 12.700-6 2 4-12.700 6.500Z"/><path d="m4 6.500 1 2M6.500 5.300l1 2M9 4.200l1 2M11.500 3l1 2" stroke="#fff" stroke-width=".9"/></svg></button>
          <button aria-label="Toàn màn hình" class="flex size-7 items-center justify-center rounded-xs bg-white shadow-md"><svg class="size-[14px]" viewBox="0 0 14 14"><path d="M1 4.500V1h3.500M9.500 1H13v3.500M13 9.500V13H9.500M4.500 13H1V9.500" fill="none" stroke="#444" stroke-width="1.600"/></svg></button>
        </div>
        <div class="flex h-7 min-w-0 flex-1 items-center overflow-hidden rounded-l-md bg-white/95 pl-[11px] text-xs font-semibold whitespace-nowrap text-[#7a7d92] shadow-md">
          <span class="mr-[7px] size-[10px] shrink-0 rounded-full bg-[#2bab4b]"></span>Đang chạy
          <span class="mr-2 ml-[7px] size-[10px] shrink-0 rounded-full bg-[#fa0000]"></span>Dừng
        </div>
      </div>
    </div>
    <div class="flex h-10 shrink-0 items-center gap-[20px] border-b border-[#eee] bg-white pl-[10px] text-[#333]">
      <button aria-label="Cài đặt bản đồ"><svg class="size-[18px]"><use href="#gear"/></svg></button>
      <button aria-label="Phóng to"><svg class="size-[18px]" viewBox="0 0 18 18"><path d="M9 2.500v13M2.500 9h13" stroke="currentColor" stroke-width="1.400"/></svg></button>
      <button aria-label="Thu nhỏ"><svg class="size-[18px]" viewBox="0 0 18 18"><path d="M2 9h14" stroke="currentColor" stroke-width="1.400"/></svg></button>
      <button aria-label="Vị trí"><svg class="size-[18px]" viewBox="0 0 18 18"><path d="M16 1.500 1.500 8.500l6.800 1.200 1.200 6.800Z" fill="none" stroke="currentColor" stroke-width="1.300" stroke-linejoin="round"/></svg></button>
    </div>
  </main>

  <!-- Report menu and fuel submenu -->
  <div class="absolute top-[299px] left-[233px] w-[231px] rounded-xs bg-white pb-px text-[#555] shadow-[0_4px_28px_rgba(0,0,0,0.22)]">
    <a href="#" class="flex h-[47px] items-center gap-[10px] pr-[18px] pl-4"><svg class="size-5 text-[#777]"><use href="#chart"/></svg>Báo cáo<svg class="mt-px ml-auto h-[10px] w-2"><use href="#chev"/></svg></a>
    <a href="#" class="flex h-12 items-center gap-[10px] pr-[18px] pl-4 font-medium text-[#f7931e]"><svg class="size-5"><use href="#fuel"/></svg>Nhiên liệu<svg class="mt-px ml-auto h-[10px] w-2"><use href="#chev"/></svg></a>
    <a href="#" class="flex h-12 items-center gap-[10px] pr-[18px] pl-4"><svg class="size-5 text-[#777]"><use href="#thermo"/></svg>Nhiệt độ<svg class="mt-px ml-auto h-[10px] w-2"><use href="#chev"/></svg></a>
    <a href="#" class="flex h-12 items-center gap-[10px] pr-[18px] pl-4"><svg class="size-5 text-[#777]"><use href="#camera"/></svg>Camera<svg class="mt-px ml-auto h-[10px] w-2"><use href="#chev"/></svg></a>
    <a href="#" class="flex h-12 items-center gap-[10px] pr-[18px] pl-4"><svg class="size-5 text-[#777]"><use href="#poly"/></svg>Vùng địa lý<svg class="mt-px ml-auto h-[10px] w-2"><use href="#chev"/></svg></a>
    <a href="#" class="flex h-12 items-center gap-[10px] pr-[18px] pl-4"><svg class="size-5 text-[#666]"><use href="#officer"/></svg>Bộ giao thông vận tải<svg class="mt-px ml-auto h-[10px] w-2"><use href="#chev"/></svg></a>
  </div>
  <div class="absolute top-[350px] left-[468px] w-[246px] rounded-xs bg-white text-[#555] shadow-[0_4px_28px_rgba(0,0,0,0.22)]">
    <a href="#" class="flex h-12 items-center gap-[10px] px-4"><svg class="size-5 text-[#777]"><use href="#chart"/></svg>Biểu đồ</a>
    <a href="#" class="flex h-12 items-center gap-[10px] px-4"><svg class="size-5 text-[#777]"><use href="#monitor"/></svg>Nạp xả</a>
    <a href="#" class="flex h-12 items-center gap-[10px] px-4"><svg class="size-5 text-[#777]"><use href="#sigma"/></svg>Tổng hợp</a>
    <a href="#" class="flex h-12 items-center gap-[10px] px-4"><svg class="size-5 text-[#777]"><use href="#truck"/></svg>Tổng hợp theo thiết bị</a>
    <a href="#" class="flex h-12 items-center gap-[10px] px-4"><svg class="size-5 text-[#777]"><use href="#fuel"/></svg>Tiêu thụ theo KM (tổng hợp)</a>
    <a href="#" class="flex h-12 items-center gap-[10px] px-4"><svg class="size-5 text-[#777]"><use href="#cal"/></svg>Tiêu thụ theo KM (ngày)</a>
  </div>

  <!-- Step highlights -->
  <svg class="pointer-events-none absolute top-0 left-0 h-[937px] w-[765px]" viewBox="0 0 765 937" aria-hidden="true">
    <g fill="none" stroke="#ff4343" stroke-width="3"><path d="M1.500 289.500h140v55H1.500ZM231.500 346.500h164v49h-164ZM464.500 588.500h251v51h-251Z"/></g>
    <g class="drop-shadow-[1px_4px_2px_rgba(0,0,0,0.5)]"><path d="m143 312 80 54M397 372l62 198" stroke="#ff4343" stroke-width="5"/><path d="m232 372-17-1.500 8-12ZM464 587l-13-12 14-4.500Z" fill="#ff4343"/></g>
  </svg>
</div>
</body>
</html>
